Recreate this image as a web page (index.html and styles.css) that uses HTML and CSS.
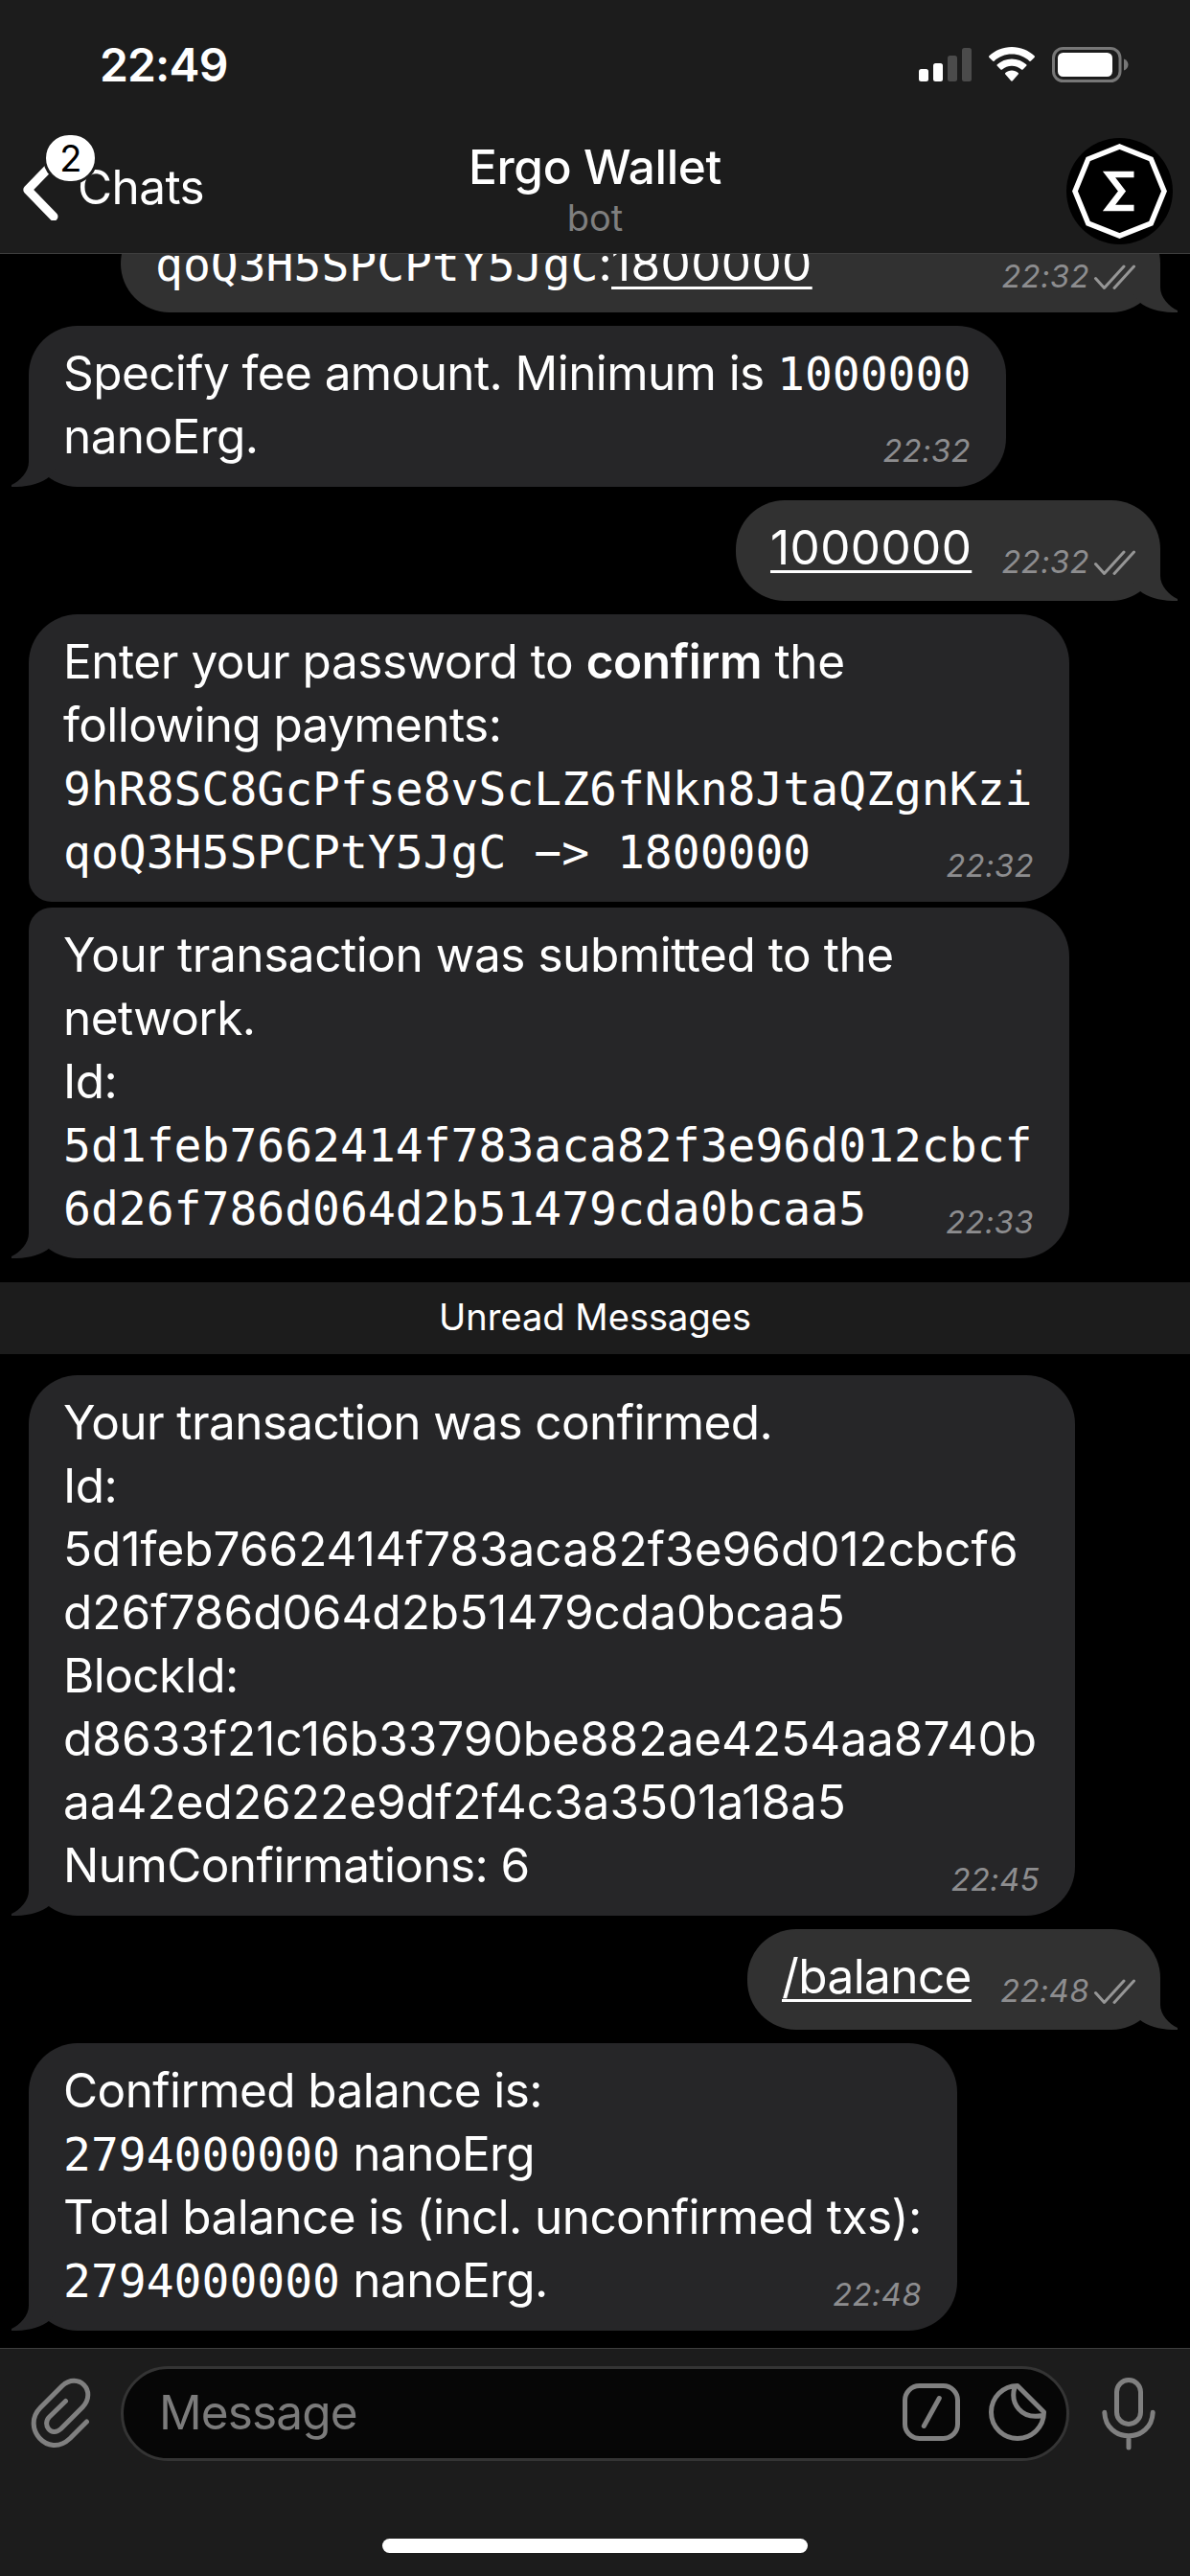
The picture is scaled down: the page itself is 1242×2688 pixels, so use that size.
FILE: index.html
```html
<!DOCTYPE html>
<html lang="en">
<head>
<meta charset="utf-8">
<title>Ergo Wallet</title>
<link rel="stylesheet" href="styles.css">
</head>
<body>
<svg class="defs" width="0" height="0">
  <symbol id="tail" viewBox="0 0 60 52"><path d="M18 0V26C18 36 9 46 0 50V52C15 52.500 31 49 39.500 41.500L48 30V0Z"/></symbol>
  <symbol id="checks" viewBox="0 0 44 28"><path d="M2.500 15.500L11.500 25.500L32 3M22 25.500L42.500 3"/></symbol>
</svg>
<div class="screen">
  <header class="top">
    <div class="status">
      <span class="clock">22:49</span>
      <div class="indicators">
        <svg width="55" height="35" viewBox="0 0 55 35"><g fill="#fff"><rect x="0" y="22" width="10" height="13" rx="2.500"/><rect x="15" y="16" width="10" height="19" rx="2.500"/></g><g fill="#4b4b4b"><rect x="30" y="8" width="10" height="27" rx="2.500"/><rect x="45" y="0" width="10" height="35" rx="2.500"/></g></svg>
        <svg class="wifi" width="48" height="36" viewBox="0 0 48 36"><path fill="#fff" d="M24 0C33.200 0 41.500 3.500 47.600 9.300C48.100 9.800 48.100 10.400 47.600 10.900L44 14.600C43.500 15.100 42.900 15.100 42.400 14.700C37.600 10.200 31.200 7.500 24 7.500S10.400 10.200 5.600 14.700C5.100 15.100 4.500 15.100 4 14.600L.4 10.900C-.1 10.400-.1 9.800.4 9.300C6.500 3.500 14.800 0 24 0ZM24 12.400C29.900 12.400 35.200 14.600 39.200 18.200C39.700 18.700 39.700 19.300 39.200 19.800L35.600 23.400C35.100 23.900 34.500 23.900 34 23.500C31.400 21.200 27.900 19.800 24 19.800S16.600 21.200 14 23.500C13.500 23.900 12.900 23.900 12.400 23.400L8.800 19.800C8.300 19.300 8.300 18.700 8.800 18.200C12.800 14.600 18.100 12.400 24 12.400ZM24 24.600C26.600 24.600 28.900 25.500 30.700 27C31.200 27.500 31.200 28 30.700 28.600L24.900 35.200C24.300 35.800 23.700 35.800 23.100 35.200L17.300 28.600C16.800 28 16.800 27.500 17.300 27C19.100 25.500 21.400 24.600 24 24.600Z"/></svg>
        <svg width="80" height="37" viewBox="0 0 80 37"><rect x="1.500" y="1.500" width="69.500" height="34" rx="10" fill="none" stroke="#777" stroke-width="3"/><rect x="6" y="6" width="57" height="25" rx="5.500" fill="#fff"/><path fill="#777" d="M75 12.500C78 13.500 79.500 16 79.500 18.500S78 23.500 75 24.500Z"/></svg>
      </div>
    </div>
    <div class="nav">
      <div class="back">
        <svg width="40" height="66" viewBox="0 0 40 66"><path d="M32 6L4.800 34L32 62" fill="none" stroke="#fff" stroke-width="9" stroke-linecap="round" stroke-linejoin="round"/></svg>
        <span class="chats">Chats</span>
        <span class="badge">2</span>
      </div>
      <div class="titles"><h1>Ergo Wallet</h1><p>bot</p></div>
      <svg class="avatar" width="111" height="111" viewBox="0 0 111 111"><circle cx="55.500" cy="55.500" r="55.500"/><path d="M55.500 9L88.300 22L102 55.500L88.300 89L55.500 102L22.700 89L9 55.500L22.700 22Z" fill="none" stroke="#fff" stroke-width="5.500"/><path d="M70.500 38H44.500L58 55.500L44.500 73H70.500" fill="none" stroke="#fff" stroke-width="6.500"/></svg>
    </div>
  </header>

  <main class="chat">
    <section class="msg out w1">
      <p class="line"><span class="body"><code>qoQ3H5SPCPtY5JgC</code>:<u class="num">1800000</u></span><time>22:32<svg class="checks"><use href="#checks"/></svg></time></p>
      <svg class="tail"><use href="#tail"/></svg>
    </section>
    <section class="msg in w2">
      <p class="line">Specify fee amount. Minimum is <code>1000000</code></p>
      <p class="line"><span class="body">nanoErg.</span><time>22:32</time></p>
      <svg class="tail"><use href="#tail"/></svg>
    </section>
    <section class="msg out single w3">
      <p class="line"><span class="body"><u class="num">1000000</u></span><time>22:32<svg class="checks"><use href="#checks"/></svg></time></p>
      <svg class="tail"><use href="#tail"/></svg>
    </section>
    <section class="msg in joined-below w4">
      <p class="line loose">Enter your password to <b>confirm</b> the</p>
      <p class="line">following payments:</p>
      <p class="line"><code>9hR8SC8GcPfse8vScLZ6fNkn8JtaQZgnKzi</code></p>
      <p class="line"><span class="body"><code>qoQ3H5SPCPtY5JgC −&gt; 1800000</code></span><time>22:32</time></p>
    </section>
    <section class="msg in joined-above w4">
      <p class="line loose">Your transaction was submitted to the</p>
      <p class="line">network.</p>
      <p class="line">Id:</p>
      <p class="line"><code>5d1feb7662414f783aca82f3e96d012cbcf</code></p>
      <p class="line"><span class="body"><code>6d26f786d064d2b51479cda0bcaa5</code></span><time>22:33</time></p>
      <svg class="tail"><use href="#tail"/></svg>
    </section>
    <div class="unread">Unread Messages</div>
    <section class="msg in w5">
      <p class="line">Your transaction was confirmed.</p>
      <p class="line">Id:</p>
      <p class="line hash">5d1feb7662414f783aca82f3e96d012cbcf6</p>
      <p class="line hash">d26f786d064d2b51479cda0bcaa5</p>
      <p class="line">BlockId:</p>
      <p class="line hash">d8633f21c16b33790be882ae4254aa8740b</p>
      <p class="line hash">aa42ed2622e9df2f4c3a3501a18a5</p>
      <p class="line"><span class="body">NumConfirmations: 6</span><time>22:45</time></p>
      <svg class="tail"><use href="#tail"/></svg>
    </section>
    <section class="msg out single w6">
      <p class="line"><span class="body"><u>/balance</u></span><time>22:48<svg class="checks"><use href="#checks"/></svg></time></p>
      <svg class="tail"><use href="#tail"/></svg>
    </section>
    <section class="msg in w7">
      <p class="line">Confirmed balance is:</p>
      <p class="line"><code>2794000000</code> nanoErg</p>
      <p class="line">Total balance is (incl. unconfirmed txs):</p>
      <p class="line"><span class="body"><code>2794000000</code> nanoErg.</span><time>22:48</time></p>
      <svg class="tail"><use href="#tail"/></svg>
    </section>
  </main>

  <footer class="bottom">
    <div class="composer">
      <svg class="ico clip" width="66" height="76" viewBox="30 2480 66 76"><path d="M68.500 2505.500L51.500 2522C43.500 2530 53.500 2543.500 63.500 2534.500L86 2512C102 2495 81.500 2474.500 65 2489.500L42 2512.500C22 2533 50 2566 73 2544.500L90.500 2527"/></svg>
      <div class="field">
        <span>Message</span>
        <svg class="ico" width="60" height="60" viewBox="0 0 60 60"><rect x="2.500" y="2.500" width="55" height="55" rx="15"/><path d="M38.300 15.500L22.300 44.500"/></svg>
        <svg class="ico" width="60" height="60" viewBox="0 0 60 60"><path d="M57.500 30A27.500 27.500 0 1 1 30 2.500ZM27 4C22 21 34 38 56 33.500"/></svg>
      </div>
      <svg class="ico mic" width="56" height="78" viewBox="1150 2480 56 78"><rect x="1165.500" y="2483.500" width="25" height="46" rx="12.500"/><path d="M1152.800 2517.300C1153.500 2533 1165 2541.800 1178 2541.800S1202.500 2533 1203.200 2517.300M1178 2542V2554"/></svg>
    </div>
    <div class="home"></div>
  </footer>
</div>
</body>
</html>
```
FILE: styles.css
```css
* { box-sizing: border-box; }
body { margin: 0; background: #000; }
.defs { display: block; position: absolute; }
.screen {
  width: 1242px; height: 2688px;
  display: flex; flex-direction: column;
  background: #000; color: #fff;
  font-family: Inter, "Liberation Sans", sans-serif;
  font-size: 49.5px; letter-spacing: -0.012em;
  font-kerning: normal;
  overflow: hidden;
}
p, h1 { margin: 0; font-weight: 400; }
svg { display: block; flex: none; }

/* header */
.top {
  flex: none; height: 265px; background: #1c1c1c;
  border-bottom: 1px solid #3e3e3e; z-index: 1;
  display: flex; flex-direction: column;
}
.status {
  height: 132px; padding: 49px 64px 0 104px;
  display: flex; justify-content: space-between; align-items: flex-start;
}
.clock { font-size: 48px; line-height: 38px; font-weight: 600; letter-spacing: -0.018em; }
.indicators { display: flex; align-items: flex-start; gap: 18px; }
.indicators svg:first-child { margin-top: 1px; }
.nav {
  height: 132px; padding: 0 18px;
  display: grid; grid-template-columns: 1fr 400px 1fr;
}
.back { position: relative; display: flex; margin-left: 6px; padding-top: 32px; }
.chats { margin: -2px 0 0 17px; line-height: 66px; }
.badge {
  position: absolute; left: 21px; top: 6px;
  width: 57px; height: 54px; border-radius: 27px;
  border: 3px solid #1c1c1c; background: #fff; color: #000;
  font-size: 38px; line-height: 48px; text-align: center;
}
.titles { text-align: center; display: flex; flex-direction: column; align-items: center; padding-top: 12px; }
.titles h1 { font-size: 49.5px; line-height: 60px; font-weight: 550; letter-spacing: -0.007em; }
.titles p { font-size: 38px; line-height: 46px; color: #7f7f7f; letter-spacing: 0; }
.avatar { justify-self: end; margin-top: 12px; }

/* conversation */
.chat {
  flex: 1; min-height: 0; overflow: hidden;
  display: flex; flex-direction: column; justify-content: flex-end;
  gap: 14px; padding: 0 31px 18px 30px;
}
.msg { position: relative; isolation: isolate; flex: none; padding: 16px 36px 20px; border-radius: 51px; }
.in { align-self: flex-start; background: #262628; }
.out { align-self: flex-end; background: #313131; padding-right: 26px; }
.single { padding-bottom: 23px; }
.joined-below { border-bottom-left-radius: 24px; }
.joined-above { border-top-left-radius: 24px; margin-top: -8px; }
.w1 { width: 1085px; }
.w1 .body { margin-top: 2px; }
.w2 { width: 1020px; }
.w3 { width: 443px; }
.w4 { width: 1086px; }
.w5 { width: 1092px; }
.w6 { width: 431px; }
.w7 { width: 969px; }
.line { display: flex; height: 66px; line-height: 66px; white-space: pre; justify-content: space-between; }
.line:not(:has(time)) { display: block; }
.loose { letter-spacing: -0.009em; }
.hash { letter-spacing: 0; }
.num { letter-spacing: 0.008em; }
code { font: 48px/1 "DejaVu Sans Mono", monospace; letter-spacing: 0; }
b { font-weight: 600; }
u { text-decoration-thickness: 3px; text-underline-offset: 6px; text-decoration-skip-ink: none; }
time {
  display: flex; align-self: flex-end;
  font-size: 32.5px; line-height: 35px; font-style: italic; color: #8d8d8f; letter-spacing: 0.016em;
}
.in time { margin-right: 1px; }
.checks { width: 44px; height: 28px; margin: 4px 0 0 4px; fill: none; stroke: #969696; stroke-width: 3; stroke-linecap: round; stroke-linejoin: round; }
.tail { position: absolute; z-index: -1; bottom: 0; width: 60px; height: 52px; }
.in .tail { left: -18px; fill: #262628; }
.out .tail { right: -18px; fill: #313131; transform: scaleX(-1); }
.unread {
  flex: none; height: 75px; margin: 11px -31px 8px -30px;
  background: #1c1c1c; text-align: center;
  font-size: 38px; line-height: 73px; letter-spacing: 0.001em;
}

/* message bar */
.bottom {
  flex: none; height: 238px; background: #1c1c1c; border-top: 1px solid #3e3e3e;
  display: flex; flex-direction: column; align-items: center; justify-content: space-between;
  padding: 18px 0 24px;
}
.composer { width: 1242px; display: flex; padding: 0 36px 0 30px; }
.ico { fill: none; stroke: #808080; stroke-width: 5; stroke-linecap: round; stroke-linejoin: round; }
.clip { margin: 11px 30px 0 0; }
.mic { margin: 11px 0 0 34px; }
.field {
  width: 990px; height: 99px; border: 3px solid #343434; border-radius: 50px; background: #060606;
  display: flex; align-items: center; gap: 30px; padding: 0 21px 3px 37px; color: #7b7b7b;
}
.field span { margin-right: auto; letter-spacing: -0.018em; }
.home { width: 444px; height: 15px; border-radius: 8px; background: #fff; }
```
